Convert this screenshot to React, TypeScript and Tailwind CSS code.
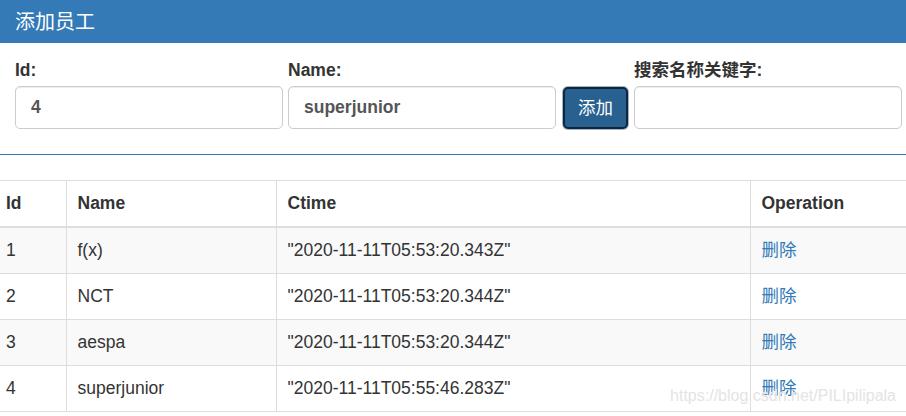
import React from "react";

const font = "font-['Liberation_Sans','Noto_Sans_CJK_SC',sans-serif]";

type Emp = { id: number; name: string; ctime: string };

const rows: Emp[] = [
  { id: 1, name: "f(x)", ctime: "2020-11-11T05:53:20.343Z" },
  { id: 2, name: "NCT", ctime: "2020-11-11T05:53:20.344Z" },
  { id: 3, name: "aespa", ctime: "2020-11-11T05:53:20.344Z" },
  { id: 4, name: "superjunior", ctime: "2020-11-11T05:55:46.283Z" },
];

function Field({ label, value }: { label: string; value: string }) {
  return (
    <label className="flex w-[268px] shrink-0 flex-col">
      <span className="mb-[3px] h-[25px] text-[17.5px] font-bold leading-[25px] text-[#333]">{label}</span>
      <input
        readOnly
        value={value}
        className="h-[43px] w-full rounded-[5px] border border-[#ccc] bg-white px-[15px] text-[17.5px] font-bold text-[#555] shadow-[inset_0_1px_1px_rgba(0,0,0,0.075)] outline-none"
      />
    </label>
  );
}

export default function App() {
  return (
    <div className={`relative h-[416px] w-[906px] overflow-hidden bg-white ${font}`}>
      {/* panel */}
      <div className="border-b border-[#337ab7]">
        <div className="flex h-[43px] items-center bg-[#337ab7] px-[15px] text-[20px] text-white">添加员工</div>
        <div className="flex items-end pl-[15px] pt-[15px] pb-[25px]">
          <Field label="Id:" value="4" />
          <div className="ml-[5px]">
            <Field label="Name:" value="superjunior" />
          </div>
          <button className="ml-[7px] h-[42px] w-[65px] shrink-0 rounded-[5px] border-2 border-[#10263a] bg-[#286090] text-[17.5px] text-white shadow-[0_0_0_1px_#9fb4c8]">
            添加
          </button>
          <div className="ml-[6px]">
            <Field label="搜索名称关键字:" value="" />
          </div>
        </div>
      </div>

      <table className="mt-[25px] w-full border-collapse text-[17.5px] leading-[25px] text-[#333]">
        <thead>
          <tr className="border-t border-[#ddd]">
            <th className="w-[66px] border-b-2 border-[#ddd] py-[10px] pl-[6px] text-left font-bold">Id</th>
            <th className="w-[210px] border-b-2 border-l border-[#ddd] px-[11px] py-[10px] text-left font-bold">Name</th>
            <th className="w-[474px] border-b-2 border-l border-[#ddd] px-[11px] py-[10px] text-left font-bold">Ctime</th>
            <th className="border-b-2 border-l border-[#ddd] px-[11px] py-[10px] text-left font-bold">Operation</th>
          </tr>
        </thead>
        <tbody>
          {rows.map((r, i) => (
            <tr key={r.id} className={i % 2 === 0 ? "bg-[#f9f9f9]" : "bg-white"}>
              <td className="border-b border-[#ddd] py-[10px] pl-[6px]">{r.id}</td>
              <td className="border-b border-l border-[#ddd] px-[11px] py-[10px]">{r.name}</td>
              <td className="border-b border-l border-[#ddd] px-[11px] py-[10px]">"{r.ctime}"</td>
              <td className="border-b border-l border-[#ddd] px-[11px] py-[10px]">
                <a href="#" className="text-[#337ab7]">删除</a>
              </td>
            </tr>
          ))}
        </tbody>
      </table>

      <div className="pointer-events-none absolute bottom-[8px] right-[10px] text-[16px] text-[#e4e4e4] [text-shadow:0_0_1px_#fff]">
        https://blog.csdn.net/PILIpilipala
      </div>
    </div>
  );
}
